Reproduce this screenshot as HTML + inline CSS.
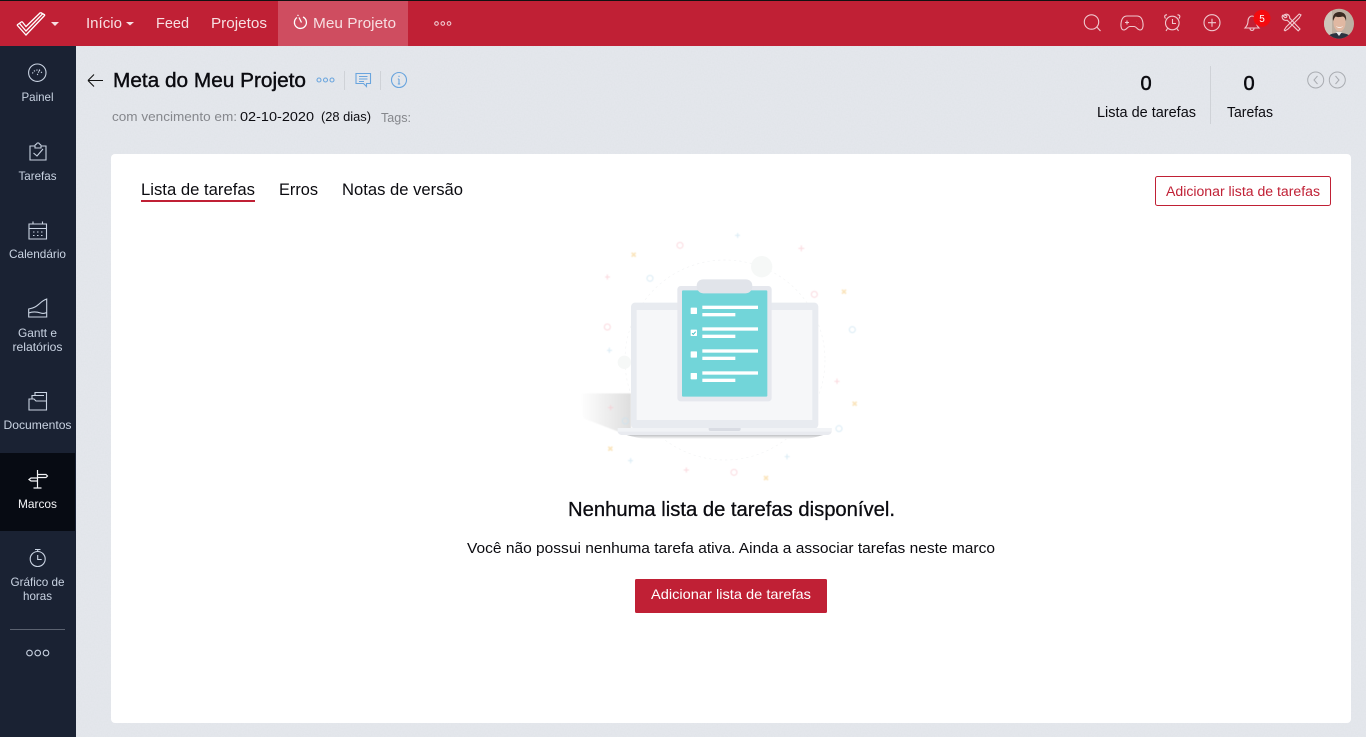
<!DOCTYPE html>
<html lang="pt">
<head>
<meta charset="utf-8">
<title>Meta do Meu Projeto</title>
<style>
html,body{margin:0;padding:0;width:1366px;height:737px;overflow:hidden;background:#e3e6eb}
svg{display:block;position:absolute;left:0;top:0}
text{font-family:"Liberation Sans",sans-serif}
.n{fill:#f7dfe2;font-size:15px}
.s{fill:#c9d3e2;font-size:12px}
.k{fill:#0b0b10}
.g{fill:#85878c;font-size:13px}
.w{fill:none;stroke:#f0c9cf;stroke-width:1.1}
.i{fill:none;stroke:#c9d3e2;stroke-width:1.1}
.b{fill:none;stroke:#6aa5de;stroke-width:1.1}
</style>
</head>
<body>
<svg width="1366" height="737" viewBox="0 0 1366 737" xmlns="http://www.w3.org/2000/svg">
<defs>
<linearGradient id="sh" x1="0" x2="1" y1="0" y2="0"><stop offset="0" stop-color="#fff"/><stop offset="1" stop-color="#dedede"/></linearGradient>
<linearGradient id="bs" x1="0" x2="0" y1="0" y2="1"><stop offset="0" stop-color="#bfc1c4"/><stop offset="1" stop-color="#fff"/></linearGradient>
<filter id="soft" x="-5%" y="-5%" width="110%" height="110%"><feGaussianBlur stdDeviation="1.2"/></filter>
<filter id="noise" x="0" y="0" width="100%" height="100%"><feTurbulence type="fractalNoise" baseFrequency=".7" numOctaves="2" seed="3"/><feColorMatrix values="0 0 0 0 .5 0 0 0 0 .5 0 0 0 0 .55 0 0 0 .5 -.15"/></filter>
</defs>
<rect width="1366" height="737" fill="#e4e7ec"/>
<rect x="76" y="46" width="1290" height="691" filter="url(#noise)" opacity=".25"/>

<!-- top bar -->
<rect width="1366" height="46" fill="#c02035"/>
<rect width="1366" height="1" fill="#111"/>
<rect x="278" y="1" width="130" height="45" fill="#cf4d60"/>
<g fill="none" stroke="#fff" stroke-width="1.3">
<path d="M17 25L26 35L45 15"/>
<path d="M19.500 23.500L26 31L43 13.500"/>
<path d="M22 21.500L26 26.500L40.500 12.500"/>
<path d="M17 25L22 21.500M40.500 12.500L45 15"/>
</g>
<path d="M51 22h8l-4 4z" fill="#f7dfe2"/>
<text class="n" x="86" y="28" textLength="36" lengthAdjust="spacingAndGlyphs">Início</text>
<path d="M126 22h8l-4 3.500z" fill="#f7dfe2"/>
<text class="n" x="156" y="28" textLength="33" lengthAdjust="spacingAndGlyphs">Feed</text>
<text class="n" x="211" y="28" textLength="56" lengthAdjust="spacingAndGlyphs">Projetos</text>
<g fill="none" stroke="#fff" stroke-width="1.3"><path d="M297 17.500a6 6 0 1 0 6 -.5"/><path d="M297.500 15l1 .8M299 17.500l2.500 5"/></g>
<text class="n" x="313" y="28" textLength="83" lengthAdjust="spacingAndGlyphs">Meu Projeto</text>
<g class="w"><circle cx="436.500" cy="23.500" r="1.800"/><circle cx="442.800" cy="23.500" r="1.800"/><circle cx="449" cy="23.500" r="1.800"/></g>

<!-- top right icons -->
<g class="w">
<circle cx="1091.500" cy="22" r="7.200"/><path d="M1096.800 27l3.700 4"/>
<path d="M1127 16h10c3.500 0 5.500 3 6 7.500.4 3.500-.5 6.500-3 6.500-2.500 0-3.500-3.500-6-3.500h-4c-2.500 0-3.500 3.500-6 3.500-2.500 0-3.400-3-3-6.500.5-4.500 2.500-7.500 6-7.500z"/>
<path d="M1125 22.500h4M1127 20.500v4M1136 21.500h.1M1138 23.500h.1"/>
<circle cx="1172.300" cy="23" r="6.800"/><path d="M1172.500 19v4.500h3.500M1165.500 18.500c-1.500-2-1-3.500 1.500-3.800M1179 18.500c1.500-2 1-3.500-1.500-3.800M1167.500 28.500l-1.500 2.500M1177 28.500l1.500 2.500"/>
<circle cx="1212" cy="22.700" r="8"/><path d="M1208 22.700h8M1212 18.700v8"/>
<path d="M1245 28c2-2 3-4 3-7 0-3 2-5 4-5 2 0 4 2 4 5 0 3 1 5 3 7zM1250 28.500c0 2.500 4 2.500 4 0"/>
<path d="M1284 15c2-1.500 4-.8 5 .5 1 1.500.6 2.500.6 2.500l10.400 11-1.800 1.800-11-10.600c-1.500.5-3.500 0-4.400-1.300-.8-1.200-.8-2.600-.3-3.500l2.500 2.300 1.600-.5.300-1.500z"/>
<path d="M1301 15l-1.800-1-2.200 2.200-10.800 10.800-1.900 3 .8.800 3-1.800 11-11z"/>
</g>
<circle cx="1262" cy="18.300" r="8.500" fill="#f40a0f"/>
<text x="1262" y="22" text-anchor="middle" font-size="10" fill="#fff">5</text>
<clipPath id="av"><circle cx="1339" cy="23.700" r="15"/></clipPath>
<g clip-path="url(#av)">
<rect x="1324" y="8" width="30" height="31" fill="#bdb0a2"/>
<rect x="1324" y="8" width="8" height="31" fill="#cfc6ba"/>
<path d="M1327 39c1-5 6-6 12-6s11 1 12 6z" fill="#2b3340"/>
<path d="M1336 32l3 4 3-4z" fill="#e8e8e8"/>
<ellipse cx="1339.500" cy="22.500" rx="6" ry="9" fill="#e0b8a2"/>
<path d="M1333 21c-1-6 2-9 6.500-9s7.500 3 6.500 9c-.8-3-1.800-4.500-3.500-4.500-3 .8-6 .8-7 0-1 1-1.500 2.500-2.500 4.500z" fill="#3a2a22"/>
<path d="M1336 26c2 1.500 5 1.500 7 0-1 2.500-6 2.500-7 0z" fill="#fff"/>
</g>

<!-- sidebar -->
<rect x="0" y="46" width="76" height="691" fill="#1a2233"/>
<rect x="0" y="453" width="75" height="78" fill="#070b13"/>
<g class="i">
<circle cx="37.300" cy="72.700" r="8.700"/><path d="M37.300 75l2.300-5.500M32.500 73.500a5 5 0 0 1 9.500 0" stroke-dasharray="1.300 1.300"/>
<path d="M35 146h-5V160H46V146h-5"/><path d="M35 148v-2.500c0-1 1-1 1.500-1.500.5-1.500 2.500-1.500 3 0 .5.500 1.500.5 1.500 1.500V148z"/><path d="M33.500 153l3.500 3 6-7"/>
<path d="M29 224h17.500v15H29zM29 228.500h17.500M33 221.500v2.500M42.500 221.500v2.500"/>
<path d="M33 232h1.500M37 232h1.500M41 232h1.500M33 235.500h1.500M37 235.500h1.500M41 235.500h1.500"/>
<path d="M28.700 309c6-1 8-3 11-5.500 2-2 4.500-3.500 7-4.500V317H28.700zM28.700 313c5-2 9-1 12 0 2 .7 4 .5 6-.5"/>
<path d="M29 399V410H46.500V401H36L34 399zM32 399V395.500H44M35 395.500V392.500H46.500V401"/>
<circle cx="37.700" cy="559" r="7.500"/><path d="M35 549.500h5.500M37.700 550v1.500M37.700 555v4.500h4"/>
</g>
<g fill="none" stroke="#f3f4f6" stroke-width="1.2">
<path d="M37.500 470v18M33.500 488h8M37.500 474.500h8.500l1.500 1.500-1.500 1.500h-8.500M37.500 478h-6.500l-2 1.500 2 1.500h6.500"/>
</g>
<text class="s" x="37.500" y="101" text-anchor="middle" textLength="32" lengthAdjust="spacingAndGlyphs">Painel</text>
<text class="s" x="37.500" y="180" text-anchor="middle" textLength="38" lengthAdjust="spacingAndGlyphs">Tarefas</text>
<text class="s" x="37.500" y="258" text-anchor="middle" textLength="57" lengthAdjust="spacingAndGlyphs">Calendário</text>
<text class="s" x="37.500" y="337" text-anchor="middle" textLength="39" lengthAdjust="spacingAndGlyphs">Gantt e</text>
<text class="s" x="37.500" y="351" text-anchor="middle" textLength="50" lengthAdjust="spacingAndGlyphs">relatórios</text>
<text class="s" x="37.500" y="429" text-anchor="middle" textLength="68" lengthAdjust="spacingAndGlyphs">Documentos</text>
<text class="s" x="37.500" y="508" text-anchor="middle" textLength="39" lengthAdjust="spacingAndGlyphs" style="fill:#f3f4f6">Marcos</text>
<text class="s" x="37.500" y="586" text-anchor="middle" textLength="54" lengthAdjust="spacingAndGlyphs">Gráfico de</text>
<text class="s" x="37.500" y="600" text-anchor="middle" textLength="29" lengthAdjust="spacingAndGlyphs">horas</text>
<rect x="10" y="629" width="55" height="1" fill="#5b6270"/>
<g class="i" stroke-width="1.5"><circle cx="29.500" cy="653" r="2.800"/><circle cx="37.700" cy="653" r="2.800"/><circle cx="46" cy="653" r="2.800"/></g>

<!-- page header -->
<path d="M88 80.500h15M88 80.500l6-6M88 80.500l6 6" fill="none" stroke="#111" stroke-width="1.1"/>
<text x="113" y="87" font-size="20" class="k" stroke="#0b0b10" stroke-width=".4" textLength="193" lengthAdjust="spacingAndGlyphs">Meta do Meu Projeto</text>
<g class="b"><circle cx="319" cy="80" r="2"/><circle cx="325.500" cy="80" r="2"/><circle cx="332" cy="80" r="2"/></g>
<rect x="344" y="71" width="1" height="19" fill="#cfd2d7"/>
<rect x="380" y="71" width="1" height="19" fill="#cfd2d7"/>
<g class="b">
<path d="M356 73.500h14.500v10h-4v3l-3-3H356zM359 76.500h8.500M359 79h8.500M359 81.500h5"/>
<circle cx="399" cy="80" r="7.500"/><path d="M399 79v5M397.800 84h2.400M397.800 79h1.200M399 75.800v1.200"/>
</g>
<text class="g" x="112" y="121" textLength="125" lengthAdjust="spacingAndGlyphs">com vencimento em:</text>
<text class="k" font-size="13" x="240" y="121" textLength="74" lengthAdjust="spacingAndGlyphs">02-10-2020</text>
<text class="k" font-size="13" x="321" y="121" textLength="50" lengthAdjust="spacingAndGlyphs">(28 dias)</text>
<text class="g" x="381" y="122" textLength="30" lengthAdjust="spacingAndGlyphs">Tags:</text>

<text class="k" font-size="20" x="1146" y="90" text-anchor="middle" stroke="#0b0b10" stroke-width=".5">0</text>
<text class="k" font-size="20" x="1249" y="90" text-anchor="middle" stroke="#0b0b10" stroke-width=".5">0</text>
<text class="k" font-size="14.500" x="1097" y="117" textLength="99" lengthAdjust="spacingAndGlyphs">Lista de tarefas</text>
<text class="k" font-size="14.500" x="1227" y="117" textLength="46" lengthAdjust="spacingAndGlyphs">Tarefas</text>
<rect x="1210" y="66" width="1" height="58" fill="#cfd2d7"/>
<g fill="none" stroke="#a9acb1" stroke-width="1"><circle cx="1315.700" cy="80" r="8"/><circle cx="1337.300" cy="80" r="8"/><path d="M1317.500 76l-3.500 4 3.500 4M1335.500 76l3.500 4-3.500 4"/></g>

<!-- card -->
<rect x="111" y="154" width="1240" height="569" rx="4" fill="#fff"/>
<text class="k" font-size="16.500" x="141" y="195" textLength="114" lengthAdjust="spacingAndGlyphs">Lista de tarefas</text>
<text class="k" font-size="16.500" x="279" y="195" textLength="39" lengthAdjust="spacingAndGlyphs">Erros</text>
<text class="k" font-size="16.500" x="342" y="195" textLength="121" lengthAdjust="spacingAndGlyphs">Notas de versão</text>
<rect x="141" y="200" width="114" height="2" fill="#c02035"/>
<rect x="1155.500" y="176.500" width="175" height="29" rx="2" fill="#fff" stroke="#c02035"/>
<text font-size="13.500" fill="#c02035" x="1166" y="196" textLength="154" lengthAdjust="spacingAndGlyphs">Adicionar lista de tarefas</text>

<!-- illustration, drawn in 3x coordinates -->
<g transform="translate(570 230) scale(.33333)">
<circle cx="465" cy="390" r="300" fill="none" stroke="#f3f4f5" stroke-width="2" stroke-dasharray="7 9"/>
<path d="M30 490H183V605H145L40 565z" fill="url(#sh)" filter="url(#soft)"/>
<circle cx="575" cy="110" r="32" fill="#f6f8f7"/>
<circle cx="163" cy="397" r="20" fill="#f6f8f7"/>
<g fill="none" stroke-width="3" opacity=".7" filter="url(#soft)">
<g stroke="#f9c9d0"><circle cx="330" cy="46" r="9"/><circle cx="733" cy="193" r="9"/><circle cx="112" cy="291" r="9"/><circle cx="492" cy="727" r="9"/>
<path d="M685 55h18M694 46v18M105 141h15M112 133v16M793 454h16M801 446v16M114 533h16M122 525v16M341 720h16M349 712v16"/></g>
<g stroke="#c9e2f0"><circle cx="240" cy="145" r="9"/><circle cx="847" cy="299" r="9"/><circle cx="166" cy="573" r="9"/><circle cx="807" cy="596" r="9"/>
<path d="M495 16h15M503 9v15M111 361h15M118 353v16M174 692h15M182 684v16M644 680h15M651 672v16"/></g>
<path stroke="#f8d9a0" stroke-width="5" d="M185 68l12 12M197 68l-12 12M816 179l12 12M828 179l-12 12M848 515l12 12M860 515l-12 12M115 650l12 12M127 650l-12 12M582 738l12 12M594 738l-12 12"/>
</g>
<rect x="183" y="218" width="562" height="378" rx="12" fill="#e8ebf0"/>
<rect x="200" y="240" width="527" height="330" fill="#f6f7f9"/>
<path d="M170 615h590c-20 5-40 12-60 12H240c-30 0-50-7-70-12z" fill="url(#bs)"/>
<path d="M143 594H785V604c0 6-6 11-14 11H157c-8 0-14-5-14-11z" fill="#e9ebf0"/>
<rect x="143" y="594" width="642" height="11" fill="#f1f3f6"/>
<path d="M416 594H512V598c0 3-3 5-6 5H422c-3 0-6-2-6-5z" fill="#d9dce3"/>
<rect x="322" y="168" width="283" height="346" rx="10" fill="#e6e8ee"/>
<rect x="336" y="181" width="256" height="319" rx="3" fill="#72d5d9"/>
<path d="M380 168c0-12 8-20 20-20h127c12 0 20 8 20 20 0 12-8 22-20 22H400c-12 0-20-10-20-22z" fill="#e1e4ea"/>
<g fill="#fff">
<rect x="362" y="233" width="19" height="19" rx="2"/><rect x="397" y="227" width="167" height="10"/><rect x="397" y="249" width="99" height="10"/>
<rect x="362" y="299" width="19" height="19" rx="2"/><rect x="397" y="292" width="167" height="10"/><rect x="397" y="314" width="99" height="10"/>
<rect x="362" y="364" width="19" height="19" rx="2"/><rect x="397" y="358" width="167" height="10"/><rect x="397" y="380" width="99" height="10"/>
<rect x="362" y="429" width="19" height="19" rx="2"/><rect x="397" y="424" width="167" height="10"/><rect x="397" y="446" width="99" height="10"/>
</g>
<path d="M366 310l4 3 7-8" fill="none" stroke="#41bcc1" stroke-width="3"/>
</g>

<text class="k" font-size="20.500" x="568" y="516" textLength="327" lengthAdjust="spacingAndGlyphs" stroke="#0b0b10" stroke-width=".3">Nenhuma lista de tarefas disponível.</text>
<text class="k" font-size="14.500" x="467" y="553" textLength="528" lengthAdjust="spacingAndGlyphs">Você não possui nenhuma tarefa ativa. Ainda a associar tarefas neste marco</text>
<rect x="635" y="579" width="192" height="34" rx="1.500" fill="#c02035"/>
<text font-size="14" fill="#fff" x="651" y="599" textLength="160" lengthAdjust="spacingAndGlyphs">Adicionar lista de tarefas</text>
</svg>
</body>
</html>
